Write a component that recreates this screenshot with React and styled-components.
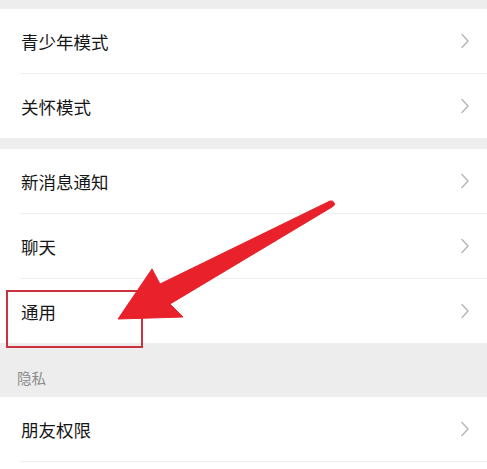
import React from 'react'
import styled, { createGlobalStyle } from 'styled-components'

const Global = createGlobalStyle`
  html, body { margin: 0; padding: 0; background: #ededed; }
  body { font-family: "Noto Sans CJK SC", "Noto Sans", sans-serif; }
`

const Page = styled.div`
  position: relative;
  width: 487px;
  height: 469px;
  overflow: hidden;
  background: #ededed;
  padding-top: 9px;
  box-sizing: border-box;
`

const Group = styled.div`
  background: #fff;
  margin-bottom: ${p => p.gap || 0}px;
`

const Row = styled.div`
  height: 64px;
  display: flex;
  align-items: center;
  justify-content: space-between;
  padding: 0 17px 0 21px;
  box-sizing: border-box;
  font-size: 17.5px;
  color: #161616;
`

const Label = styled.span`
  line-height: 1;
  margin-top: 2px;
`

const Divider = styled.div`
  height: 1px;
  margin-left: 20px;
  background: #efefef;
`

const Tail = styled.div`
  height: 7px;
`

const SectionTitle = styled.div`
  height: 54px;
  display: flex;
  align-items: flex-end;
  padding: 0 0 9px 17px;
  box-sizing: border-box;
  font-size: 14.5px;
  color: #8a8a8a;
`

const Overlay = styled.svg`
  position: absolute;
  left: 0;
  top: 0;
  pointer-events: none;
`

const Chevron = () => (
  <svg width="10" height="16" viewBox="0 0 10 16">
    <path d="M2 1.5 L8 8 L2 14.5" fill="none" stroke="#b8b8b8" strokeWidth="1.5" strokeLinecap="round" strokeLinejoin="round" />
  </svg>
)

const Item = ({ children }) => (
  <Row>
    <Label>{children}</Label>
    <Chevron />
  </Row>
)

export default function App() {
  return (
    <>
      <Global />
      <Page>
        <Group gap={11}>
          <Item>青少年模式</Item>
          <Divider />
          <Item>关怀模式</Item>
        </Group>
        <Group>
          <Item>新消息通知</Item>
          <Divider />
          <Item>聊天</Item>
          <Divider />
          <Item>通用</Item>
        </Group>
        <SectionTitle>隐私</SectionTitle>
        <Group>
          <Item>朋友权限</Item>
          <Divider />
          <Tail />
        </Group>
        <Overlay width="487" height="469" viewBox="0 0 487 469">
          <rect x="7" y="291" width="135" height="56" fill="none" stroke="#c9323e" strokeWidth="2" />
          <path
            d="M334 202.5 Q336 205 332 207 L170 304 L183 317 L118 319 L152 269 L160 284 L330 201 Q333 200.5 334 202.5 Z"
            fill="#e8212b"
            stroke="#e8212b"
            strokeWidth="1"
            strokeLinejoin="round"
          />
        </Overlay>
      </Page>
    </>
  )
}
